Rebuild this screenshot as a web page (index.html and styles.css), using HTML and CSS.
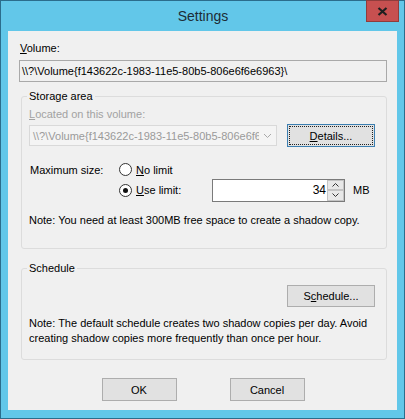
FILE: index.html
```html
<!DOCTYPE html>
<html>
<head>
<meta charset="utf-8">
<title>Settings</title>
<link rel="stylesheet" href="styles.css">
</head>
<body>
<div class="window">
  <div class="titlebar">
    <span class="title">Settings</span>
    <button class="close" aria-label="Close">
      <svg width="11" height="9" viewBox="0 0 11 9"><path d="M1.5 1 L9.5 8 M9.5 1 L1.5 8" stroke="#1f1f1f" stroke-width="2.2" fill="none"/></svg>
    </button>
  </div>
  <div class="client">
    <div class="lbl-volume"><u>V</u>olume:</div>
    <div class="textbox">\\?\Volume{f143622c-1983-11e5-80b5-806e6f6e6963}\</div>

    <fieldset class="group storage">
      <legend>Storage area</legend>
      <div class="located"><u>L</u>ocated on this volume:</div>
      <div class="row">
        <div class="combo">
          <span class="combo-text">\\?\Volume{f143622c-1983-11e5-80b5-806e6f6e6963}\</span>
          <svg class="combo-arrow" width="17" height="19" viewBox="0 0 17 19"><path d="M5 8 L8.5 11.5 L12 8" stroke="#a8a8a8" stroke-width="1" fill="none"/></svg>
        </div>
        <button class="btn details"><span class="focus-rect"><u>D</u>etails...</span></button>
      </div>
      <div class="limits">
        <span class="max-lbl">Maximum size:</span>
        <label class="radio"><span class="circle"></span><span><u>N</u>o limit</span></label>
        <span></span><span></span>
        <span></span>
        <label class="radio"><span class="circle checked"></span><span><u>U</u>se limit:</span></label>
        <div class="spin">
          <span class="spin-value">34</span>
          <div class="spin-btns">
            <span class="spin-btn"><svg width="7" height="4" viewBox="0 0 7 4"><path d="M0.5 3.5 L3.5 0.5 L6.5 3.5" stroke="#333" stroke-width="1" fill="none"/></svg></span>
            <span class="spin-btn"><svg width="7" height="4" viewBox="0 0 7 4"><path d="M0.5 0.5 L3.5 3.5 L6.5 0.5" stroke="#333" stroke-width="1" fill="none"/></svg></span>
          </div>
        </div>
        <span class="mb">MB</span>
      </div>
      <p class="note">Note: You need at least 300MB free space to create a shadow copy.</p>
    </fieldset>

    <fieldset class="group schedule">
      <legend>Schedule</legend>
      <div class="row end">
        <button class="btn sched">S<u>c</u>hedule...</button>
      </div>
      <p class="note note2">Note: The default schedule creates two shadow copies per day. Avoid<br>creating shadow copies more frequently than once per hour.</p>
    </fieldset>

    <div class="buttons">
      <button class="btn dlg">OK</button>
      <button class="btn dlg">Cancel</button>
    </div>
  </div>
</div>
</body>
</html>
```
FILE: styles.css
```css
* { box-sizing: border-box; }

body {
  margin: 0;
  font-family: "Liberation Sans", Arial, sans-serif;
  font-size: 11px;
  color: #000;
}

.window {
  position: relative;
  width: 405px;
  height: 419px;
  border: 1px solid #2b6d8c;
  background: #62c7e9;
  padding: 0 7px 8px 7px;
  display: flex;
  flex-direction: column;
}

.titlebar {
  height: 30px;
  display: flex;
  align-items: center;
  justify-content: center;
  flex: none;
}

.title {
  font-size: 14px;
  color: #1d2c36;
  margin-left: 1px;
}

.close {
  position: absolute;
  top: -1px;
  right: 5px;
  width: 33px;
  height: 22px;
  padding: 0;
  background: #c75050;
  border: 1px solid #903c3c;
  display: flex;
  align-items: center;
  justify-content: center;
}

.client {
  flex: 1;
  background: #f0f0f0;
  padding: 0 10px 0 11px;
  display: flex;
  flex-direction: column;
}

.lbl-volume {
  margin: 10px 0 0 1px;
  line-height: 15px;
}

.textbox {
  margin-top: 4px;
  height: 22px;
  border: 1px solid #a9a9a9;
  background: #f0f0f0;
  padding: 0 2px;
  line-height: 20px;
  white-space: nowrap;
  overflow: hidden;
}

.group {
  margin: 7px 0 0 2px;
  border: 1px solid #dcdcdc;
  border-radius: 3px;
  padding: 3px 11px 20px 7px;
  min-width: 0;
}

.group legend {
  padding: 0 2px;
  margin-left: -2px;
  line-height: 15px;
}

.located {
  color: #a2a2a2;
  line-height: 15px;
  margin-bottom: 2px;
}

.row {
  display: flex;
  align-items: center;
  height: 23px;
}

.row.end {
  justify-content: flex-end;
}

.combo {
  width: 248px;
  height: 21px;
  border: 1px solid #d9d9d9;
  background: #f4f4f4;
  display: flex;
  align-items: center;
  color: #9a9a9a;
}

.combo-text {
  flex: 1;
  overflow: hidden;
  white-space: nowrap;
  padding-left: 3px;
}

.combo-arrow {
  flex: none;
}

.btn {
  font: inherit;
  color: #000;
  background: #e1e1e1;
  border: 1px solid #adadad;
  padding: 0;
  height: 22px;
  width: 88px;
}

.details {
  margin-left: auto;
  height: 23px;
  border-color: #3c7fb1;
  display: flex;
  padding: 1px;
}

.focus-rect {
  flex: 1;
  border: 1px dotted #222;
  display: flex;
  align-items: center;
  justify-content: center;
}

.limits {
  display: grid;
  grid-template-columns: 90px 93px 133px auto;
  grid-template-rows: 17px 24px;
  align-items: center;
  margin-top: 14px;
}

.max-lbl {
  padding-left: 1px;
}

.radio {
  display: flex;
  align-items: center;
  gap: 4px;
}

.circle {
  width: 13px;
  height: 13px;
  border: 1px solid #333;
  border-radius: 50%;
  background: #fff;
  display: flex;
  align-items: center;
  justify-content: center;
}

.circle.checked::after {
  content: "";
  width: 5px;
  height: 5px;
  border-radius: 50%;
  background: #111;
}

.spin {
  height: 23px;
  border: 1px solid #7a7a7a;
  background: #fff;
  display: flex;
}

.spin-value {
  flex: 1;
  text-align: right;
  padding-right: 1px;
  line-height: 21px;
  font-size: 12px;
}

.spin-btns {
  width: 17px;
  display: flex;
  flex-direction: column;
}

.spin-btn {
  flex: 1;
  background: #e8e8e8;
  border: 1px solid #c4c4c4;
  display: flex;
  align-items: center;
  justify-content: center;
}

.mb {
  padding-left: 8px;
}

.note {
  margin: 11px 0 0 0;
  line-height: 15px;
}

.schedule {
  margin-top: 12px;
  padding: 8px 11px 13px 7px;
}

.note2 {
  margin-top: 9px;
}

.buttons {
  margin-top: 18px;
  display: flex;
  justify-content: center;
  gap: 53px;
}

.dlg {
  width: 75px;
  height: 23px;
}
```
